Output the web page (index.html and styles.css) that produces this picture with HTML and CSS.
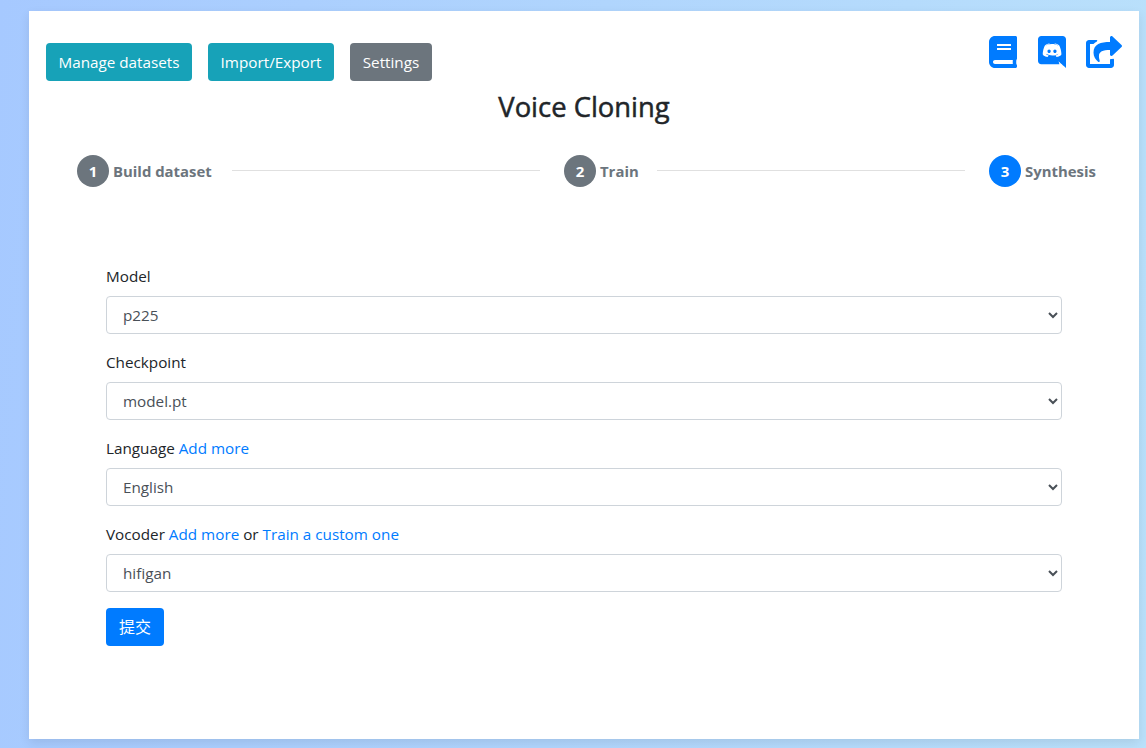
FILE: index.html
```html
<!DOCTYPE html>
<html lang="en">
<head>
<meta charset="utf-8">
<title>Voice Cloning</title>
<link rel="stylesheet" href="styles.css">
</head>
<body>
<main class="card">
  <header class="toolbar">
    <nav class="actions">
      <a class="btn btn-info btn-manage">Manage datasets</a>
      <a class="btn btn-info btn-import">Import/Export</a>
      <a class="btn btn-secondary btn-settings">Settings</a>
    </nav>
    <div class="icons">
      <svg class="icon" viewBox="0 0 448 512"><path d="M448 360V24c0-13.3-10.7-24-24-24H96C43 0 0 43 0 96v320c0 53 43 96 96 96h328c13.3 0 24-10.7 24-24v-16c0-7.5-3.5-14.3-8.9-18.7-4.2-15.4-4.2-59.3 0-74.7 5.4-4.3 8.9-11.1 8.9-18.6zM128 134c0-3.3 2.7-6 6-6h212c3.3 0 6 2.7 6 6v20c0 3.3-2.7 6-6 6H134c-3.3 0-6-2.7-6-6v-20zm0 64c0-3.3 2.7-6 6-6h212c3.3 0 6 2.7 6 6v20c0 3.3-2.7 6-6 6H134c-3.3 0-6-2.7-6-6v-20zm253.4 250H96c-17.7 0-32-14.3-32-32 0-17.6 14.4-32 32-32h285.4c-1.9 17.1-1.9 46.9 0 64z"/></svg>
      <svg class="icon" viewBox="0 0 448 512"><path d="M297.216 243.2c0 15.616-11.52 28.416-26.112 28.416-14.336 0-26.112-12.8-26.112-28.416s11.52-28.416 26.112-28.416c14.592 0 26.112 12.8 26.112 28.416zm-119.552-28.416c-14.592 0-26.112 12.8-26.112 28.416s11.776 28.416 26.112 28.416c14.592 0 26.112-12.8 26.112-28.416.256-15.616-11.52-28.416-26.112-28.416zM448 52.736V512c-64.494-56.994-43.868-38.128-118.784-107.776l13.568 47.36H52.48C23.552 451.584 0 428.032 0 398.848V52.736C0 23.552 23.552 0 52.48 0h343.04C424.448 0 448 23.552 448 52.736zm-72.96 242.688c0-82.432-36.864-149.248-36.864-149.248-36.864-27.648-71.936-26.88-71.936-26.88l-3.584 4.096c43.52 13.312 63.744 32.512 63.744 32.512-60.811-33.329-132.244-33.335-191.232-7.424-9.472 4.352-15.104 7.424-15.104 7.424s21.248-20.224 67.328-33.536l-2.56-3.072s-35.072-.768-71.936 26.88c0 0-36.864 66.816-36.864 149.248 0 0 21.504 37.12 78.08 38.912 0 0 9.472-11.52 17.152-21.248-32.512-9.728-44.8-30.208-44.8-30.208 3.766 2.636 9.976 6.053 10.496 6.4 43.21 24.198 104.588 32.126 159.744 8.96 8.96-3.328 18.944-8.192 29.44-15.104 0 0-12.8 20.992-46.336 30.464 7.68 9.728 16.896 20.736 16.896 20.736 56.576-1.792 78.336-38.912 78.336-38.912z"/></svg>
      <svg class="icon icon-wide" viewBox="0 0 576 512"><path d="M568.482 177.448L424.479 313.433C409.3 327.768 384 317.14 384 295.985v-71.963c-144.575.97-205.566 35.113-164.775 171.353 4.483 14.973-12.846 26.567-25.006 17.33C155.252 383.105 120 326.488 120 269.339c0-143.937 117.599-172.5 264-173.312V24.012c0-21.174 25.317-31.768 40.479-17.448l144.003 135.988c10.02 9.463 10.028 25.425 0 34.896zM384 379.128V448H64V128h50.916a11.99 11.99 0 0 0 8.648-3.693c14.953-15.568 32.237-27.89 51.014-37.676C185.708 80.83 181.584 64 169.033 64H48C21.49 64 0 85.49 0 112v352c0 26.51 21.49 48 48 48h352c26.51 0 48-21.49 48-48v-88.806c0-8.288-8.197-14.066-16.011-11.302a71.83 71.83 0 0 1-34.189 3.377c-7.27-1.046-13.8 4.514-13.8 11.859z"/></svg>
    </div>
  </header>
  <h1 class="title">Voice Cloning</h1>
  <div class="stepper">
    <div class="step"><span class="circle">1</span><span class="label label-build">Build dataset</span></div>
    <div class="line"></div>
    <div class="step"><span class="circle">2</span><span class="label label-train">Train</span></div>
    <div class="line"></div>
    <div class="step"><span class="circle active">3</span><span class="label label-synth">Synthesis</span></div>
  </div>
  <form class="form">
    <div class="group">
      <label class="caption">Model</label>
      <select class="control"><option>p225</option></select>
    </div>
    <div class="group">
      <label class="caption">Checkpoint</label>
      <select class="control"><option>model.pt</option></select>
    </div>
    <div class="group">
      <label class="caption">Language <a class="link">Add more</a></label>
      <select class="control"><option>English</option></select>
    </div>
    <div class="group">
      <label class="caption">Vocoder <a class="link">Add more</a> or <a class="link">Train a custom one</a></label>
      <select class="control"><option>hifigan</option></select>
    </div>
    <button class="btn btn-primary" type="button">提交</button>
  </form>
</main>
</body>
</html>
```
FILE: styles.css
```css
* { box-sizing: border-box; }
body {
  margin: 0;
  height: 748px;
  padding: 11px 7px 9px 29px;
  overflow: hidden;
  font: 15.25px/24px "Open Sans", "Noto Sans CJK SC", sans-serif;
  color: #212529;
  background: linear-gradient(95deg, #a6c9ff, #bae1fb);
}
.card {
  height: 728px;
  padding: 25px 17px 0;
  background: #fff;
  box-shadow: 0 4px 10px rgba(0, 0, 0, .09);
}
.toolbar { display: flex; justify-content: space-between; height: 45px; }
.actions { display: flex; gap: 16px; padding-top: 7px; }
.btn {
  display: flex;
  align-items: center;
  justify-content: center;
  height: 38px;
  border: 0;
  border-radius: 4px;
  color: #fff;
  font: inherit;
  white-space: nowrap;
}
.btn-info { background: #17a2b8; }
.btn-secondary { background: #6c757d; }
.btn-primary { width: 58px; background: #007bff; font-size: 16px; }
.btn-manage { width: 146px; }
.btn-import { width: 126px; }
.btn-settings { width: 82px; }
.icons { display: flex; gap: 20.4px; }
.icon { width: 28px; height: 32px; fill: #007bff; }
.icon-wide { width: 36px; }
.title {
  margin: 9px 0 0;
  font-size: 27.4px;
  line-height: 34px;
  font-weight: 500;
  text-align: center;
  -webkit-text-stroke: .5px #212529;
}
.stepper { display: flex; align-items: center; margin-top: 31px; padding: 0 27px 0 31px; }
.step { display: flex; align-items: center; gap: 4px; font-weight: 700; color: #6c757d; }
.circle {
  width: 32px;
  height: 32px;
  border-radius: 50%;
  background: #6c757d;
  color: #fff;
  font-size: 15px;
  line-height: 33px;
  text-align: center;
}
.active { background: #007bff; }
.label { font-size: 14.9px; white-space: nowrap; }
.label-build { width: 99px; }
.label-train { width: 37px; }
.label-synth { width: 70px; }
.line { flex: 1; height: 1px; margin: 0 24px 1px 20px; background: #e0e0e0; }
.form { margin: 77px 60px 0; }
.group { margin-bottom: 16px; }
.caption { display: block; margin-bottom: 8px; }
.link { color: #007bff; }
.control {
  display: block;
  width: 100%;
  height: 38px;
  padding: 6px 13px 6px 12px;
  border: 1px solid #ced4da;
  border-radius: 4px;
  background: #fff;
  color: #495057;
  font: inherit;
}
```
